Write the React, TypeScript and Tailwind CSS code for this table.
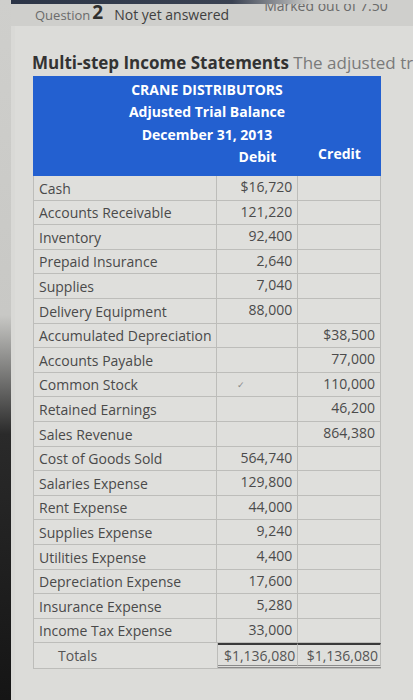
import React from "react";

type Row = { label: string; debit?: string; credit?: string; mark?: boolean };

const rows: Row[] = [
  { label: "Cash", debit: "$16,720" },
  { label: "Accounts Receivable", debit: "121,220" },
  { label: "Inventory", debit: "92,400" },
  { label: "Prepaid Insurance", debit: "2,640" },
  { label: "Supplies", debit: "7,040" },
  { label: "Delivery Equipment", debit: "88,000" },
  { label: "Accumulated Depreciation", credit: "$38,500" },
  { label: "Accounts Payable", credit: "77,000" },
  { label: "Common Stock", credit: "110,000", mark: true },
  { label: "Retained Earnings", credit: "46,200" },
  { label: "Sales Revenue", credit: "864,380" },
  { label: "Cost of Goods Sold", debit: "564,740" },
  { label: "Salaries Expense", debit: "129,800" },
  { label: "Rent Expense", debit: "44,000" },
  { label: "Supplies Expense", debit: "9,240" },
  { label: "Utilities Expense", debit: "4,400" },
  { label: "Depreciation Expense", debit: "17,600" },
  { label: "Insurance Expense", debit: "5,280" },
  { label: "Income Tax Expense", debit: "33,000" },
];

export default function App() {
  return (
    <div
      className="w-[413px] h-[700px] overflow-hidden flex bg-[#d9d9d6] text-[#4b4b4b]"
      style={{ fontFamily: '"Open Sans", "Noto Sans", sans-serif' }}
    >
      <div className="w-[11px] shrink-0 bg-[linear-gradient(to_bottom,#cfcfcc_0%,#c8c8c5_45%,#2a2a2a_62%,#151515_100%)]" />
      <div className="flex-1 flex flex-col">
        <div className="h-[4px] bg-[linear-gradient(to_right,#2c3547_0%,#3a4252_55%,#cfcfcc_75%)]" />
        <div className="h-[22px] bg-[#cfcfcc] flex items-end pl-[24px] pb-[4px]">
          <span className="text-[13px] text-[#6b6b6b] leading-none">Question</span>
          <span className="text-[19px] font-bold text-[#2f2f2f] leading-none ml-[2px]">2</span>
          <span className="text-[14px] text-[#3f3f3f] leading-none ml-[11px]">Not yet answered</span>
          <div className="h-[9px] overflow-hidden ml-[35px] self-start">
            <div className="text-[14px] text-[#6a6a6a] leading-none mt-[-5px]">Marked out of 7.50</div>
          </div>
        </div>
        <div className="flex-1 ml-[4px] bg-[#dcdcd9] pt-[26px]">
          <div className="pl-[17px] text-[17px] leading-[22px] whitespace-nowrap">
            <span className="font-bold text-[#333]">Multi-step Income Statements</span>
            <span className="text-[#7a7a7a]"> The adjusted tr</span>
          </div>
          <div className="ml-[18px] mt-[2px] w-[348px]">
            <div className="bg-[#2360d0] text-white font-bold text-[14px] h-[100px] flex flex-col">
              <div className="text-center leading-[22px] pt-[3px]">CRANE DISTRIBUTORS</div>
              <div className="text-center leading-[22px]">Adjusted Trial Balance</div>
              <div className="text-center leading-[24px]">December 31, 2013</div>
              <div className="flex leading-[20px]">
                <div className="w-[184px]" />
                <div className="w-[81px] text-center">Debit</div>
                <div className="w-[83px] text-center mt-[-3px]">Credit</div>
              </div>
            </div>
            <div className="text-[14px] border-l border-[#bdbdba]">
              {rows.map((r, i) => (
                <div key={i} className="flex h-[24.6px] border-b border-[#bdbdba] bg-[#dfdfdc]">
                  <div className="w-[184px] pl-[5px] flex items-end pb-[1px] border-r border-[#bdbdba] text-[#4a4a4a] whitespace-nowrap">
                    {r.label}
                  </div>
                  <div className="w-[81px] pr-[5px] flex items-start justify-end border-r border-[#bdbdba] relative">
                    {r.debit}
                    {r.mark && (
                      <span className="absolute left-[20px] top-[5px] text-[9px] text-[#888]">✓</span>
                    )}
                  </div>
                  <div className="w-[83px] pr-[5px] flex items-start justify-end border-r border-[#bdbdba]">
                    {r.credit}
                  </div>
                </div>
              ))}
              <div className="flex h-[26px] bg-[#dfdfdc] border-b border-[#bdbdba]">
                <div className="w-[184px] pl-[24px] flex items-center border-r border-[#bdbdba] text-[#555]">
                  Totals
                </div>
                <div className="w-[81px] pr-[2px] flex items-center justify-end border-t-2 border-t-[#3a3a3a] border-b-[3px] border-b-[#8a8a8a] border-double border-r border-r-[#bdbdba] text-[#555] whitespace-nowrap">
                  $1,136,080
                </div>
                <div className="w-[83px] pr-[2px] flex items-center justify-end border-t-2 border-t-[#3a3a3a] border-b-[3px] border-b-[#8a8a8a] border-double border-r border-r-[#bdbdba] text-[#555] whitespace-nowrap">
                  $1,136,080
                </div>
              </div>
            </div>
          </div>
        </div>
      </div>
    </div>
  );
}
